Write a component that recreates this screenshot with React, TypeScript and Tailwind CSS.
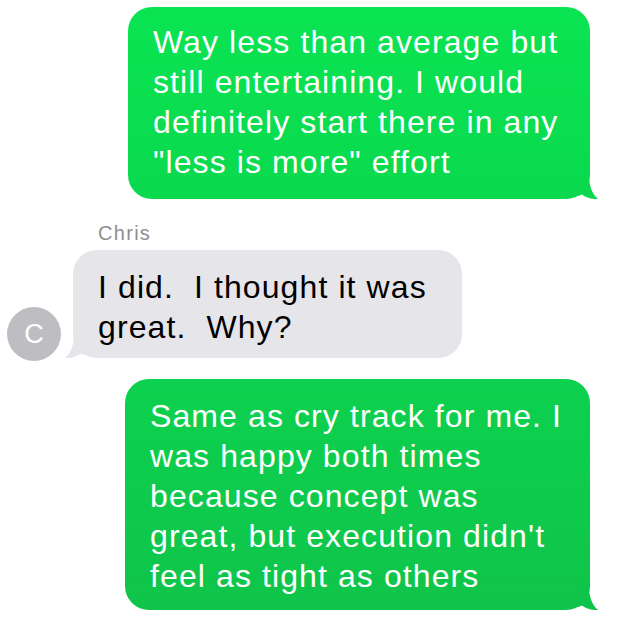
import React from "react";

const font = { fontFamily: '"Liberation Sans", Arial, sans-serif' };

function Tail({ side, color }: { side: "left" | "right"; color: string }) {
  const flip = side === "left";
  return (
    <svg
      width="24"
      height="24"
      viewBox="0 0 24 24"
      className={
        flip
          ? "absolute bottom-0 left-[-10px] -scale-x-100"
          : "absolute bottom-0 right-[-10px]"
      }
    >
      <path
        d="M0 0 H13 C13 11 16 19 22 24 C16 24.5 10 22.5 6 19.5 C4 20.5 2 21 0 21 Z"
        fill={color}
      />
    </svg>
  );
}

function Sent({ lines, from, to, className }: { lines: string[]; from: string; to: string; className: string }) {
  return (
    <div className={`relative ${className}`}>
      <div
        className="rounded-[24px] pl-[25px] pr-2 text-white text-[32px] leading-[40px] tracking-[1.1px] whitespace-pre"
        style={{ background: `linear-gradient(to bottom, ${from}, ${to})` }}
      >
        {lines.map((l, i) => (
          <div key={i}>{l}</div>
        ))}
      </div>
      <Tail side="right" color={to} />
    </div>
  );
}

export default function App() {
  return (
    <div className="w-[622px] h-[631px] bg-white overflow-hidden" style={font}>
      <Sent
        className="ml-[128px] mt-[7px] w-[462px] [&>div:first-child]:pt-[15px] [&>div:first-child]:pb-[17px]"
        from="#0ae452"
        to="#0ad94e"
        lines={[
          "Way less than average but",
          "still entertaining. I would",
          "definitely start there in any",
          '"less is more" effort',
        ]}
      />

      <div className="mt-[23px] ml-[98px] text-[20px] leading-[22px] tracking-[1.3px] text-[#8e8e93]">Chris</div>

      <div className="mt-[6px] flex items-end">
        <div className="ml-[7px] mb-[-3px] w-[54px] h-[54px] rounded-full bg-[#bdbdc2] flex items-center justify-center text-white text-[27px] font-light">
          C
        </div>
        <div className="relative ml-[12px] w-[389px]">
          <div className="rounded-[24px] bg-[#e5e5ea] pl-[25px] pt-[17px] pb-[11px] text-black text-[32px] leading-[40px] tracking-[1.1px] whitespace-pre">
            <div>I did.  I thought it was</div>
            <div>great.  Why?</div>
          </div>
          <Tail side="left" color="#e5e5ea" />
        </div>
      </div>

      <Sent
        className="mt-[21px] ml-[125px] w-[465px] [&>div:first-child]:pt-[17px] [&>div:first-child]:pb-[14px]"
        from="#0dd14e"
        to="#0fc44a"
        lines={[
          "Same as cry track for me. I",
          "was happy both times",
          "because concept was",
          "great, but execution didn't",
          "feel as tight as others",
        ]}
      />
    </div>
  );
}
